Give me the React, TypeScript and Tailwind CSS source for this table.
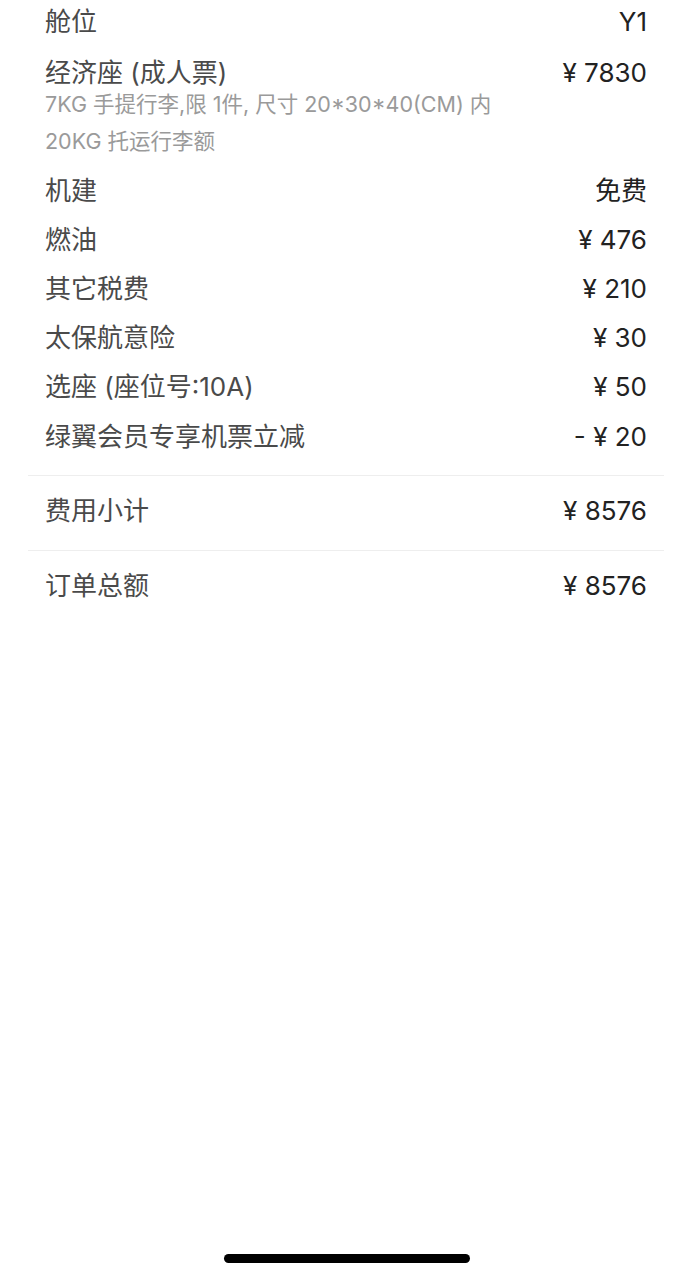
const FONT = 'font-["Inter","Noto_Sans_CJK_SC",sans-serif]'

const FEES: { label: string; value: string }[] = [
  { label: '机建', value: '免费' },
  { label: '燃油', value: '¥ 476' },
  { label: '其它税费', value: '¥ 210' },
  { label: '太保航意险', value: '¥ 30' },
  { label: '选座 (座位号:10A)', value: '¥ 50' },
  { label: '绿翼会员专享机票立减', value: '- ¥ 20' },
]

function Row({ label, value, className = '' }: { label: string; value: string; className?: string }) {
  return (
    <div className={`flex items-center justify-between px-[45px] ${className}`}>
      <span className="text-[#4a4a4a]">{label}</span>
      <span className="text-[#222]">{value}</span>
    </div>
  )
}

export default function App() {
  return (
    <div className={`relative h-[1278px] w-[692px] overflow-hidden bg-white text-[26px] leading-none ${FONT}`}>
      <Row label="舱位" value="Y1" className="h-[44px]" />

      <div className="mt-[12px]">
        <Row label="经济座 (成人票)" value="¥ 7830" className="h-[34px]" />
        <div className="px-[45px] text-[21.5px] text-[#9a9a9a]">
          <div className="flex h-[30px] items-center">7KG 手提行李,限 1件, 尺寸 20*30*40(CM) 内</div>
          <div className="mt-[7px] flex h-[30px] items-center">20KG 托运行李额</div>
        </div>
      </div>

      <div className="mt-[9px]">
        {FEES.map(f => (
          <Row key={f.label} label={f.label} value={f.value} className="h-[49.2px]" />
        ))}
      </div>

      <div className="mx-[28px] mt-[14px] h-px bg-[#eeeeee]" />
      <Row label="费用小计" value="¥ 8576" className="h-[74px] pb-[4px]" />
      <div className="mx-[28px] h-px bg-[#eeeeee]" />
      <Row label="订单总额" value="¥ 8576" className="h-[70px]" />

      <div className="absolute bottom-[15px] left-[224px] h-[9px] w-[246px] rounded-full bg-black" />
    </div>
  )
}
